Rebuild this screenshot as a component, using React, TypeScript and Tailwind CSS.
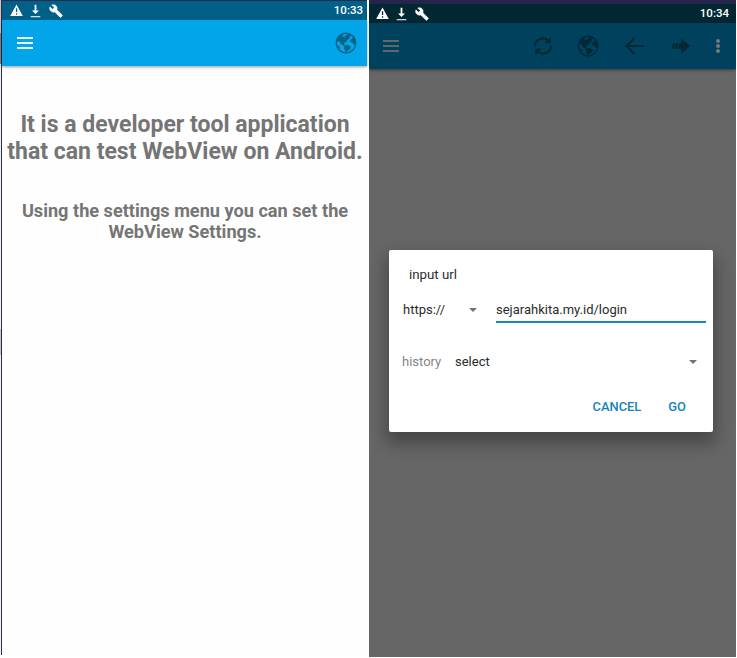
import React from 'react';

function StatusBar({ time, className }: { time: string; className: string }) {
  return (
    <div className={`flex h-[19px] shrink-0 items-center text-white ${className}`}>
      <svg className="h-[13px] w-[13px]" viewBox="0 0 13 13" fill="currentColor">
        <path fillRule="evenodd" d="M6.5 .5 12.8 12H.2ZM5.9 4.2v3.9h1.3V4.2ZM5.9 9.2v1.5h1.3V9.2Z" />
      </svg>
      <svg className="ml-[7px] h-[14px] w-[11px]" viewBox="0 0 11 14" fill="currentColor">
        <path d="M4.600 .8h1.800v5.700H9L5.500 10 2 6.500h2.600Z" />
        <path d="M.7 12h9.600v1.300H.7Z" opacity=".8" />
      </svg>
      <svg className="ml-[8px] h-[14px] w-[14px]" viewBox="0 0 24 24" fill="currentColor" stroke="currentColor" strokeWidth=".8">
        <path d="m22.700 19-9.100-9.100c.9-2.300.4-5-1.500-6.900-2-2-5-2.400-7.400-1.300L9 6 6 9 1.600 4.700C.4 7.100.9 10.100 2.900 12.100c1.900 1.900 4.600 2.400 6.900 1.500l9.100 9.100c.4.4 1 .4 1.400 0l2.300-2.300c.5-.4.5-1.100.1-1.400Z" />
      </svg>
      <span className="ml-auto text-[11.500px] font-medium">{time}</span>
    </div>
  );
}

function MenuIcon({ className }: { className: string }) {
  return (
    <div className={`flex w-[16px] flex-col gap-[3px] ${className}`}>
      <i className="h-[2px] bg-current" />
      <i className="h-[2px] bg-current" />
      <i className="h-[2px] bg-current" />
    </div>
  );
}

function Globe({ className }: { className: string }) {
  return (
    <svg className={`h-[22px] w-[22px] ${className}`} viewBox="0 0 22 22" fill="currentColor">
      <circle cx="11" cy="11" r="9.800" fill="none" stroke="currentColor" strokeWidth="1.300" />
      <path d="M2.200 6.800 6 2.700l2.400 .6-1 1.800 2.400-.3 1.800-2.400 3.600-.7 1.700 1.500-2.200 1.300-.4 2.300-2.200 1.200-.8 2.200-2.300 .3.800 1.900-1.500 1.300-2.700-1.800-1.300-2.700-2 .4Z" />
      <path d="M9.600 13.500 12 12.800l3.800 1.800-.7 2.600-2.600 1.600-1.200 1.900-1.600-2.600-.9-2.800Z" />
      <path d="m15.300 8.300 2.200-2.600 1.600-.3 1.600 3.800-.3 3.600-2.200-.5-1-2.100-2.200-.4Z" />
      <path d="m2 12.700 2.400 1.500.5 3.300-2-1.900Z" />
    </svg>
  );
}

function Caret() {
  return (
    <svg className="h-[4px] w-[8px] text-[#737373]" viewBox="0 0 8 4" fill="currentColor">
      <path d="M0 0h8L4 4Z" />
    </svg>
  );
}

function HomeScreen() {
  return (
    <div className="flex h-[655px] w-[366px] flex-col border-l border-t border-[#2b2b4b] bg-[#fefefe]">
      <StatusBar time="10:33" className="bg-[#006088] pl-[8px] pr-[4px]" />
      <div className="flex h-[46px] shrink-0 items-center bg-[#02a4ea] pl-[15px] pr-[10px] shadow-[0_1px_3px_rgba(0,0,0,0.4)]">
        <MenuIcon className="text-[#e8f6fd]" />
        <Globe className="ml-auto text-[#0b6386]" />
      </div>
      <div className="flex flex-col items-center whitespace-nowrap pl-px pt-[45px] font-bold text-[#757575]">
        <h1 className="text-center text-[23px] leading-[27px]">
          It is a developer tool application
          <br />
          that can test WebView on Android.
        </h1>
        <p className="mt-[35px] text-center text-[18.150px] leading-[21.300px]">
          Using the settings menu you can set the
          <br />
          WebView Settings.
        </p>
      </div>
    </div>
  );
}

function Toolbar() {
  return (
    <div className="flex h-[46px] shrink-0 items-center bg-[#00425e] pl-[14px] text-[#022935] shadow-[0_1px_3px_rgba(0,0,0,0.45)]">
      <MenuIcon className="text-[#64676a]" />
      <svg className="ml-[134px] h-[20px] w-[20px]" viewBox="0 0 20 20" fill="none" stroke="currentColor" strokeWidth="2.200">
        <path d="M2 10.500A8 7.500 0 0 1 15.500 4.500M18 9.500A8 7.500 0 0 1 4.500 15.500" />
        <path fill="currentColor" stroke="none" d="M17.700 1v6.300h-6.300ZM2.300 19v-6.300h6.300Z" />
      </svg>
      <Globe className="ml-[24px]" />
      <svg className="ml-[26px] h-[18px] w-[20px]" viewBox="0 0 20 18" fill="none" stroke="currentColor" strokeWidth="2.200">
        <path d="M9.500 1 1.500 9l8 8M1.500 9H19" />
      </svg>
      <svg className="ml-[26px] h-[16px] w-[20px]" viewBox="0 0 20 16" fill="currentColor">
        <path d="M10 .2 19.500 8 10 15.800v-5.100H6.800l1.700-5.400H10ZM2 5.300h2.500l-1.800 5.400H.2ZM5.200 5.300h2.600l-1.700 5.400H3.500Z" />
      </svg>
      <div className="ml-[25px] flex w-[4px] flex-col gap-px">
        <i className="h-[4px] rounded-full bg-[#74797c]" />
        <i className="h-[4px] rounded-full bg-[#74797c]" />
        <i className="h-[4px] rounded-full bg-[#74797c]" />
      </div>
    </div>
  );
}

function UrlDialog() {
  return (
    <div className="ml-[20px] mt-[181px] h-[182px] w-[324px] rounded-[2px] bg-white text-[13px] text-[#2b2b2b] shadow-[0_9px_16px_3px_rgba(0,0,0,0.3)]">
      <div className="pl-[20px] pt-[16px] text-[13.300px] leading-[18px]">input url</div>
      <div className="mt-[12px] flex h-[27px] items-start pl-[14px]">
        <div className="flex h-[27px] w-[74px] items-center justify-between">
          <span>https://</span>
          <Caret />
        </div>
        <div className="ml-[19px] h-[27px] w-[210px] border-b-2 border-[#1489c0] leading-[27px]">
          sejarahkita.my.id/login
        </div>
      </div>
      <div className="mt-[29px] flex h-[20px] items-center pl-[13px] pr-[16px]">
        <span className="w-[53px] text-[#858585]">history</span>
        <span className="mr-auto">select</span>
        <Caret />
      </div>
      <div className="mt-[25px] flex justify-end gap-[27px] pr-[27px] text-[12.900px] font-medium leading-[20px] text-[#1583b8]">
        <button>CANCEL</button>
        <button>GO</button>
      </div>
    </div>
  );
}

export default function App() {
  return (
    <div className="flex h-[658px] w-[737px] overflow-hidden bg-white font-['Roboto','Liberation_Sans',sans-serif]">
      <div className="h-[655px] w-px bg-[#f1f1f1]">
        <div className="h-[33px] bg-[#c9c9c9]" />
        <div className="h-[31px] bg-[#858585]" />
        <div className="mt-[265px] h-[26px] bg-[#c5c5c8]" />
      </div>
      <HomeScreen />
      <div className="ml-[2px] h-[657px] w-[367px] overflow-hidden bg-[#666666]">
        <div className="h-[4px] bg-[#25244a]" />
        <StatusBar time="10:34" className="bg-[#012733] pl-[7px] pr-[7px]" />
        <Toolbar />
        <UrlDialog />
      </div>
    </div>
  );
}
